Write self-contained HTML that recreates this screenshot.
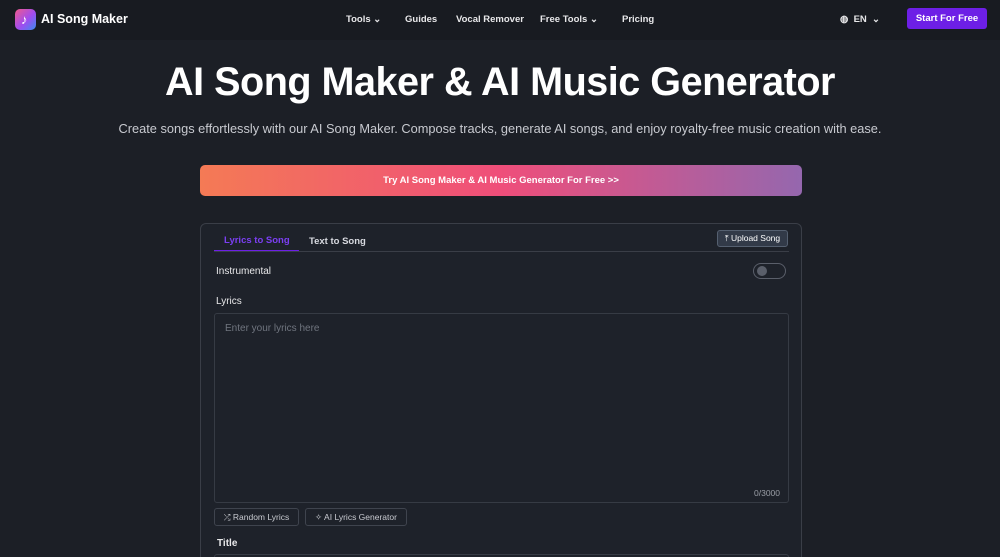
<!DOCTYPE html>
<html><head><meta charset="utf-8"><style>
*{box-sizing:border-box;margin:0;padding:0}
html,body{width:1000px;height:557px;overflow:hidden}
body{position:relative;background:#1c1f26;font-family:"Liberation Sans",sans-serif;color:#fff}
.nav{height:40px;background:#181b21;position:relative}
.logo{position:absolute;left:15px;top:9px;width:21px;height:21px;border-radius:5px;background:linear-gradient(135deg,#f05a8c,#a04cf0 55%,#3a8cf0);}
.logo span{position:absolute;left:6px;top:3px;font-size:13px;color:#fff}
.brand{position:absolute;left:41px;top:12px;font-size:12.5px;font-weight:bold}
.links{position:absolute;top:14px;font-size:9.5px;font-weight:bold;color:#e8e8ea}
.links span{position:absolute;white-space:nowrap}
.btn{position:absolute;left:907px;top:8px;width:80px;height:21px;background:#6d1fe6;border-radius:3px;font-size:9.5px;font-weight:bold;text-align:center;line-height:21px}
h1{position:absolute;top:60px;width:1000px;text-align:center;font-size:39.6px;font-weight:bold;letter-spacing:-0.5px}
.sub{position:absolute;top:121px;width:1000px;text-align:center;font-size:12.8px;color:#c8cad0}
.cta{position:absolute;left:200px;top:165px;width:602px;height:31px;border-radius:5px;background:linear-gradient(90deg,#f47a55,#ef4e7a 50%,#9567ae);font-size:9.5px;font-weight:bold;text-align:center;line-height:31px}
.card{position:absolute;left:200px;top:223px;width:602px;height:340px;border:1px solid #3a3e47;border-radius:6px;background:#1e222a}
.abs{position:absolute}
.small{font-size:10px}
.box{border:1px solid #3f444e;border-radius:3px;background:#1e222a}
</style></head><body>
<div class="nav">
<div class="logo"><span>♪</span></div>
<div class="brand">AI Song Maker</div>
<div class="links">
<span style="left:346px">Tools &#8964;</span>
<span style="left:405px">Guides</span>
<span style="left:456px">Vocal Remover</span>
<span style="left:540px">Free Tools &#8964;</span>
<span style="left:622px">Pricing</span>
<span style="left:840px">◍ &nbsp;EN &nbsp;&#8964;</span>
</div>
<div class="btn">Start For Free</div>
</div>
<h1>AI Song Maker &amp; AI Music Generator</h1>
<div class="sub">Create songs effortlessly with our AI Song Maker. Compose tracks, generate AI songs, and enjoy royalty-free music creation with ease.</div>
<div class="cta">Try AI Song Maker &amp; AI Music Generator For Free &gt;&gt;</div>
<div class="card">
<div class="abs" style="left:23px;top:11px;font-size:9.5px;color:#7b3ff2;font-weight:bold">Lyrics to Song</div>
<div class="abs" style="left:13px;top:26px;width:85px;height:2px;background:#6d1fe6"></div>
<div class="abs" style="left:108px;top:12px;font-size:9.5px;color:#d8dae0;font-weight:bold">Text to Song</div>
<div class="abs" style="left:13px;top:27px;width:575px;height:1px;background:#3a3e47"></div>
<div class="abs box" style="left:516px;top:6px;width:71px;height:17px;background:#323a48;border-color:#556070;font-size:8.5px;text-align:center;line-height:15px">⤒ Upload Song</div>
<div class="abs small" style="left:15px;top:42px;color:#e8e8ea">Instrumental</div>
<div class="abs" style="left:552px;top:39px;width:33px;height:16px;border:1px solid #5a5f6a;border-radius:8px"><div style="position:absolute;left:3px;top:2px;width:10px;height:10px;border-radius:50%;background:#5a5f6a"></div></div>
<div class="abs small" style="left:15px;top:72px;color:#e8e8ea">Lyrics</div>
<div class="abs box" style="left:13px;top:89px;width:575px;height:190px;border-color:#363b44"></div>
<div class="abs small" style="left:24px;top:99px;color:#70757f">Enter your lyrics here</div>
<div class="abs" style="left:553px;top:264px;font-size:8.5px;color:#9a9ea6">0/3000</div>
<div class="abs box" style="left:13px;top:284px;width:85px;height:18px;font-size:8.5px;line-height:16px;color:#c8cad0;text-align:center">⤮ Random Lyrics</div>
<div class="abs box" style="left:104px;top:284px;width:102px;height:18px;font-size:8.5px;line-height:16px;color:#c8cad0;text-align:center">✧ AI Lyrics Generator</div>
<div class="abs small" style="left:16px;top:314px;font-weight:bold;color:#e8e8ea">Title</div>
<div class="abs box" style="left:13px;top:330px;width:575px;height:20px;border-color:#363b44"></div>
</div>
</body></html>
